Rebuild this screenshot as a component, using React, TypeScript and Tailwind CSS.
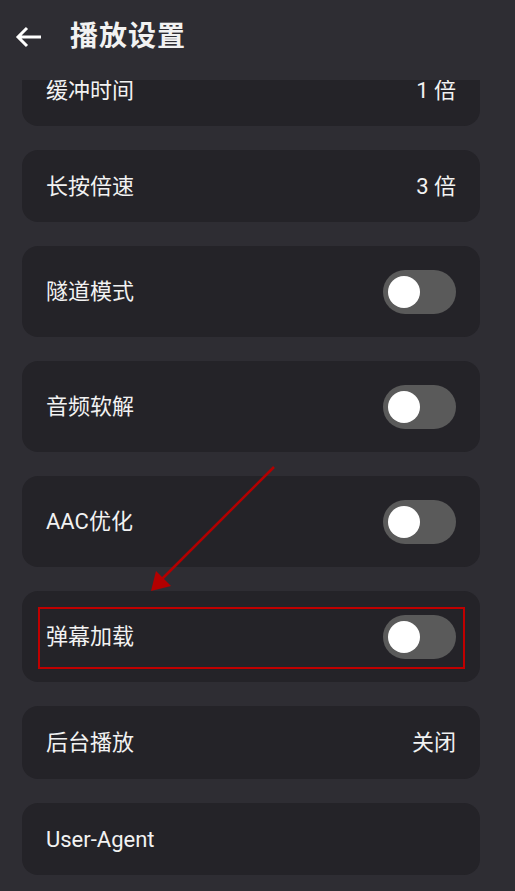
import React from 'react';

type Row = {label: string; value?: string; toggle?: boolean; h: string};

const rows: Row[] = [
  {label: '缓冲时间', value: '1 倍', h: 'h-[72px]'},
  {label: '长按倍速', value: '3 倍', h: 'h-[72px]'},
  {label: '隧道模式', toggle: true, h: 'h-[91px]'},
  {label: '音频软解', toggle: true, h: 'h-[91px]'},
  {label: 'AAC优化', toggle: true, h: 'h-[91px]'},
  {label: '弹幕加载', toggle: true, h: 'h-[91px]'},
  {label: '后台播放', value: '关闭', h: 'h-[73px]'},
  {label: 'User-Agent', h: 'h-[72px]'},
];

const Toggle = () => (
  <div className="w-[73px] h-[44px] rounded-full bg-[#5a5a5a] flex items-center px-[5px]">
    <div className="w-[32px] h-[32px] rounded-full bg-white" />
  </div>
);

const App: React.FC = () => {
  return (
    <div
      className="relative w-[515px] h-[891px] overflow-hidden bg-[#2e2d33] text-[#f2f2f2]"
      style={{fontFamily: "Roboto, 'Noto Sans CJK SC', sans-serif"}}>
      <header className="relative z-10 h-[80px] bg-[#2e2d33] flex items-center pl-[15px]">
        <svg width="27" height="22" viewBox="0 0 27 22" className="mt-[-6px]">
          <path d="M26 11H3M12 2L3 11l9 9" stroke="#ffffff" strokeWidth="3" fill="none" />
        </svg>
        <h1 className="ml-[28px] mt-[-6px] text-[28px] font-bold tracking-[1px]">播放设置</h1>
      </header>
      <main className="mt-[-26px] pl-[22px] pr-[35px] flex flex-col gap-[24px]">
        {rows.map((r) => (
          <div
            key={r.label}
            className={`${r.h} rounded-[16px] bg-[#242328] flex items-center justify-between pl-[24px] pr-[24px]`}>
            <span className="text-[22px]">{r.label}</span>
            {r.value && <span className="text-[22px]">{r.value}</span>}
            {r.toggle && <Toggle />}
          </div>
        ))}
      </main>

      {/* annotation overlay */}
      <div className="absolute left-[38px] top-[607px] w-[427px] h-[62px] border-2 border-[#c00000]" />
      <svg className="absolute left-0 top-0" width="515" height="891">
        <line x1="274" y1="467" x2="162" y2="579" stroke="#b30000" strokeWidth="2.5" />
        <polygon points="151,591 156,571 171,586" fill="#b30000" />
      </svg>
    </div>
  );
};

export default App;
